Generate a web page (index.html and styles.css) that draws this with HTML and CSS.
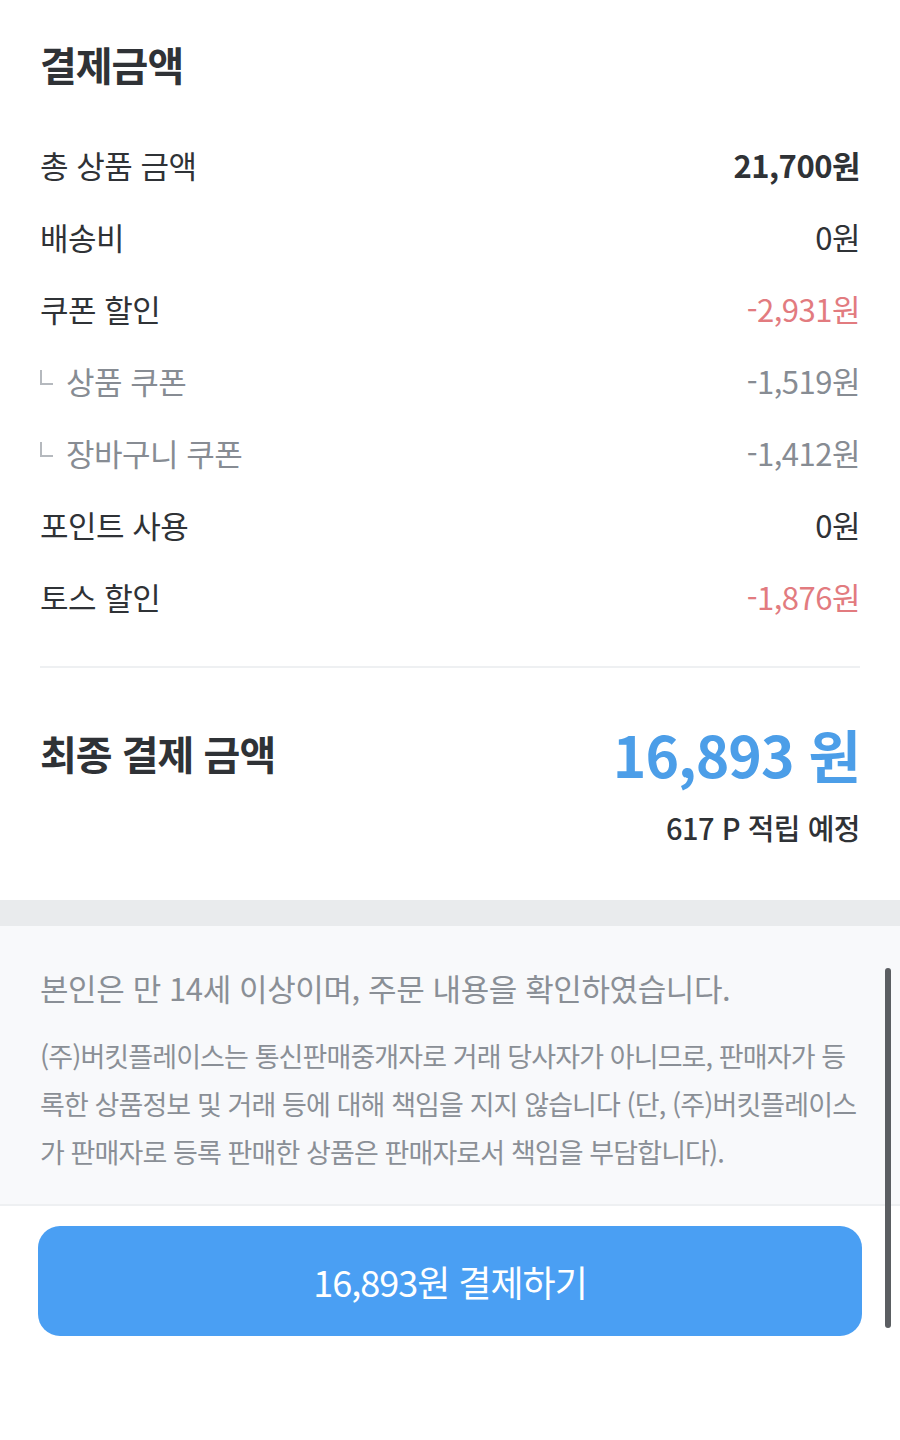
FILE: index.html
```html
<!DOCTYPE html>
<html lang="ko">
<head>
    <meta charset="UTF-8">
    <meta name="viewport" content="width=device-width, initial-scale=1.0">
    <title>결제금액</title>
    <link rel="stylesheet" href="styles.css">
</head>
<body>
    <div class="page">
        <section class="summary">
            <h2>결제금액</h2>

            <div class="rows">
                <div class="row">
                    <span>총 상품 금액</span>
                    <span class="strong">21,700원</span>
                </div>
                <div class="row">
                    <span>배송비</span>
                    <span>0원</span>
                </div>
                <div class="row">
                    <span>쿠폰 할인</span>
                    <span class="minus">-2,931원</span>
                </div>
                <div class="row sub">
                    <span><i class="branch"></i>상품 쿠폰</span>
                    <span>-1,519원</span>
                </div>
                <div class="row sub">
                    <span><i class="branch"></i>장바구니 쿠폰</span>
                    <span>-1,412원</span>
                </div>
                <div class="row">
                    <span>포인트 사용</span>
                    <span>0원</span>
                </div>
                <div class="row">
                    <span>토스 할인</span>
                    <span class="minus">-1,876원</span>
                </div>
            </div>

            <div class="total">
                <div class="total-line">
                    <h3>최종 결제 금액</h3>
                    <span class="total-price">16,893 원</span>
                </div>
                <p class="points">617 P 적립 예정</p>
            </div>
        </section>

        <div class="gap"></div>

        <section class="notice">
            <p class="agree">본인은 만 14세 이상이며, 주문 내용을 확인하였습니다.</p>
            <p class="legal">(주)버킷플레이스는 통신판매중개자로 거래 당사자가 아니므로, 판매자가 등록한 상품정보 및 거래 등에 대해 책임을 지지 않습니다 (단, (주)버킷플레이스가 판매자로 등록 판매한 상품은 판매자로서 책임을 부담합니다).</p>
        </section>

        <div class="pay">
            <button type="button">16,893원 결제하기</button>
        </div>

        <div class="scrollbar"></div>
    </div>
</body>
</html>
```

FILE: styles.css
```css
body {
    margin: 0;
    background: #ffffff;
    font-family: "Noto Sans CJK KR", "Noto Sans", sans-serif;
    color: #2f3236;
}
.page {
    position: relative;
    width: 900px;
    min-height: 1440px;
}
.summary {
    padding: 32px 40px 0;
}
h2 {
    margin: 0;
    font-size: 40px;
    font-weight: 700;
    line-height: 64px;
    letter-spacing: -1px;
    color: #2f3236;
}
.rows {
    margin-top: 32px;
}
.row {
    display: flex;
    justify-content: space-between;
    align-items: center;
    height: 72px;
    font-size: 31px;
    letter-spacing: -0.5px;
}
.row .strong {
    font-weight: 700;
}
.row .minus {
    color: #e27b7f;
}
.row.sub {
    color: #878c93;
}
.row.sub span:first-child {
    display: flex;
    align-items: center;
}
.branch {
    display: inline-block;
    width: 13px;
    height: 15px;
    margin: 0 13px 6px 0;
    border-left: 2px solid #b5b9be;
    border-bottom: 2px solid #b5b9be;
    box-sizing: border-box;
}
.total {
    margin-top: 34px;
    border-top: 2px solid #eef0f2;
    padding: 50px 0 52px;
}
.total-line {
    display: flex;
    justify-content: space-between;
    align-items: center;
}
h3 {
    margin: 0;
    font-size: 40px;
    font-weight: 700;
    letter-spacing: -1px;
}
.total-price {
    font-size: 57px;
    font-weight: 700;
    color: #4c9ee8;
    letter-spacing: -1px;
    line-height: 70px;
}
.points {
    margin: 18px 0 0;
    text-align: right;
    font-size: 29px;
    font-weight: 500;
    letter-spacing: -0.5px;
    color: #2f3236;
}
.gap {
    height: 26px;
    background: #e9ebed;
}
.notice {
    background: #f8f9fb;
    padding: 40px 40px 28px;
    border-bottom: 2px solid #eef0f2;
    color: #8a8f96;
}
.agree {
    margin: 0;
    font-size: 31px;
    letter-spacing: -0.4px;
    line-height: 44px;
}
.legal {
    margin: 22px 0 0;
    font-size: 27px;
    letter-spacing: -0.9px;
    line-height: 48px;
    word-break: break-all;
}
.pay {
    padding: 20px 38px;
}
.pay button {
    display: block;
    width: 100%;
    height: 110px;
    border: none;
    border-radius: 22px;
    background: #4a9ff3;
    color: #ffffff;
    font-family: inherit;
    font-size: 36px;
    font-weight: 400;
    letter-spacing: -1px;
}
.scrollbar {
    position: absolute;
    left: 885px;
    top: 968px;
    width: 6px;
    height: 360px;
    border-radius: 3px;
    background: #5b5e62;
}
```
